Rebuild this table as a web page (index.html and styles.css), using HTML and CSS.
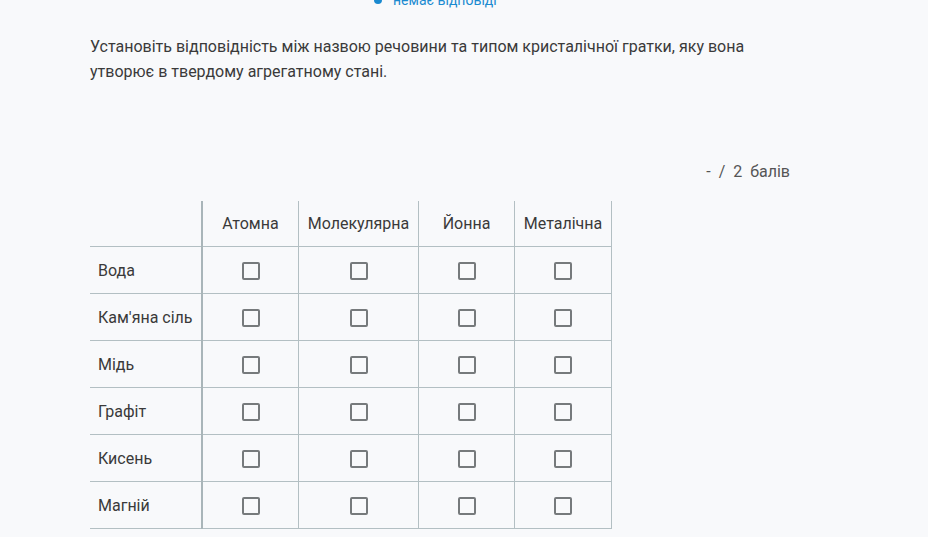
FILE: index.html
```html
<!DOCTYPE html>
<html lang="uk">
<head>
<meta charset="utf-8">
<link rel="stylesheet" href="styles.css">
</head>
<body>
<div class="page">
  <div class="status"><span class="dot"></span><span class="status-text">немає відповіді</span></div>
  <p class="question">Установіть відповідність між назвою речовини та типом кристалічної гратки, яку вона утворює в твердому агрегатному стані.</p>
  <div class="score">-&nbsp; /&nbsp; 2&nbsp; балів</div>
  <table class="grid">
    <thead>
      <tr>
        <th class="corner"></th>
        <th class="c1">Атомна</th>
        <th class="c2">Молекулярна</th>
        <th class="c3">Йонна</th>
        <th class="c4">Металічна</th>
      </tr>
    </thead>
    <tbody>
      <tr><td class="label">Вода</td><td><span class="box"></span></td><td><span class="box"></span></td><td><span class="box"></span></td><td><span class="box"></span></td></tr>
      <tr><td class="label">Кам'яна сіль</td><td><span class="box"></span></td><td><span class="box"></span></td><td><span class="box"></span></td><td><span class="box"></span></td></tr>
      <tr><td class="label">Мідь</td><td><span class="box"></span></td><td><span class="box"></span></td><td><span class="box"></span></td><td><span class="box"></span></td></tr>
      <tr><td class="label">Графіт</td><td><span class="box"></span></td><td><span class="box"></span></td><td><span class="box"></span></td><td><span class="box"></span></td></tr>
      <tr><td class="label">Кисень</td><td><span class="box"></span></td><td><span class="box"></span></td><td><span class="box"></span></td><td><span class="box"></span></td></tr>
      <tr><td class="label">Магній</td><td><span class="box"></span></td><td><span class="box"></span></td><td><span class="box"></span></td><td><span class="box"></span></td></tr>
    </tbody>
  </table>
</div>
</body>
</html>
```
FILE: styles.css
```css
html, body {
  margin: 0;
  padding: 0;
  background: #f8f9fb;
}
body {
  font-family: Roboto, "Liberation Sans", sans-serif;
  color: #3a3a3a;
}
.page {
  width: 700px;
  margin-left: 90px;
}
.status {
  display: flex;
  align-items: center;
  margin-top: -9px;
  margin-left: 284px;
  height: 18px;
  font-size: 14px;
  color: #1a8ad0;
}
.dot {
  width: 8px;
  height: 8px;
  border-radius: 50%;
  background: #1a8ad0;
  margin-right: 11px;
}
.question {
  margin: 25px 0 0 0;
  font-size: 16px;
  line-height: 25px;
  padding-right: 40px;
}
.score {
  margin-top: 78px;
  text-align: right;
  font-size: 16px;
  line-height: 20px;
  color: #555;
}
.grid {
  margin-top: 19px;
  border-collapse: collapse;
  font-size: 16px;
}
.grid th {
  font-weight: normal;
  height: 45px;
  padding: 0;
  text-align: center;
  border-left: 1px solid #b3bfc3;
  border-bottom: 1px solid #b3bfc3;
  vertical-align: middle;
}
.grid th.corner {
  border-left: none;
}
.grid th.c1 { border-left: 2px solid #a9b5b9; }
.grid th.c4 { border-right: 1px solid #b3bfc3; }
.corner { width: 111px; }
.c1 { width: 95px; }
.c2 { width: 119px; }
.c3 { width: 95px; }
.c4 { width: 96px; }
.grid td {
  height: 46px;
  padding: 0;
  text-align: center;
  vertical-align: middle;
  border: 1px solid #b3bfc3;
}
.grid td.label {
  text-align: left;
  padding-left: 8px;
  border-left: none;
}
.grid td:nth-child(2) {
  border-left: 2px solid #a9b5b9;
}
.box {
  display: inline-block;
  width: 14px;
  height: 14px;
  border: 2px solid #767a7c;
  border-radius: 2px;
  vertical-align: middle;
}
```
